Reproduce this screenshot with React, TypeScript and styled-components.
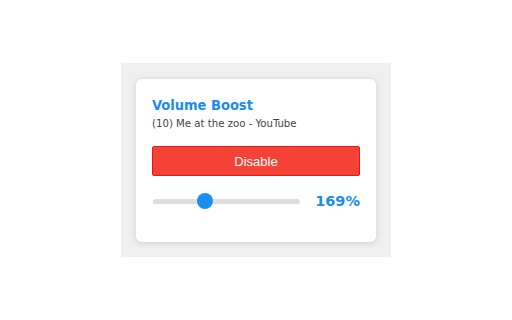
import React, { FC } from "react"
import styled, { createGlobalStyle } from "styled-components"

const GlobalStyle = createGlobalStyle`
    html, body {
        margin: 0;
        padding: 0;
        background: #ffffff;
    }
    body {
        width: 512px;
        height: 320px;
        display: flex;
        align-items: center;
        justify-content: center;
    }
`

const StyledBackdrop = styled.div`
    width: 270px;
    height: 194px;
    box-sizing: border-box;
    padding: 16px 15px 15px 15px;
    background: #efefef;
`

const StyledCard = styled.div`
    width: 240px;
    height: 163px;
    box-sizing: border-box;
    padding: 17px 16px 0 16px;
    background: #ffffff;
    border-radius: 6px;
    box-shadow: 0 1px 6px rgba(0, 0, 0, 0.14);
`

const StyledTitle = styled.h1`
    margin: 0;
    font-family: "DejaVu Sans Condensed", "DejaVu Sans", sans-serif;
    font-weight: bold;
    font-size: 14.5px;
    line-height: 18px;
    color: #1a8cf0;
`

const StyledSubtitle = styled.div`
    margin-top: 3px;
    font-family: "DejaVu Sans Condensed", "DejaVu Sans", sans-serif;
    font-size: 11.3px;
    line-height: 14px;
    color: #444444;
`

const StyledButton = styled.button`
    display: block;
    width: 100%;
    height: 30px;
    margin-top: 15px;
    padding: 0;
    border: 1px solid #e21b10;
    border-radius: 2px;
    background: #f44336;
    color: #ffffff;
    font-family: "Liberation Sans", Arial, sans-serif;
    font-size: 13px;
    cursor: pointer;
`

const StyledSliderRow = styled.div`
    display: flex;
    align-items: center;
    justify-content: space-between;
    height: 18px;
    margin-top: 16px;
`

const StyledTrack = styled.div`
    position: relative;
    width: 147px;
    height: 5px;
    margin-left: 1px;
    border-radius: 3px;
    background: #dddddd;
`

const StyledThumb = styled.div`
    position: absolute;
    top: 50%;
    width: 16px;
    height: 16px;
    margin-top: -8px;
    border-radius: 50%;
    background: #1a8ff2;
`

const StyledValue = styled.span`
    font-family: "DejaVu Sans", sans-serif;
    font-weight: bold;
    font-size: 14.5px;
    color: #1a8cf0;
`

const Slider: FC<{ value: number, max: number }> = ({ value, max }) => {
    const left = (value / max) * (147 - 16)
    return (
        <StyledTrack>
            <StyledThumb style={{ left: `${left}px` }} />
        </StyledTrack>
    )
}

const App: FC = () => {
    const volume = 169

    return (
        <>
            <GlobalStyle />
            <StyledBackdrop>
                <StyledCard>
                    <StyledTitle>Volume Boost</StyledTitle>
                    <StyledSubtitle>(10) Me at the zoo - YouTube</StyledSubtitle>
                    <StyledButton>Disable</StyledButton>
                    <StyledSliderRow>
                        <Slider value={volume} max={500} />
                        <StyledValue>{volume}%</StyledValue>
                    </StyledSliderRow>
                </StyledCard>
            </StyledBackdrop>
        </>
    )
}

export default App
